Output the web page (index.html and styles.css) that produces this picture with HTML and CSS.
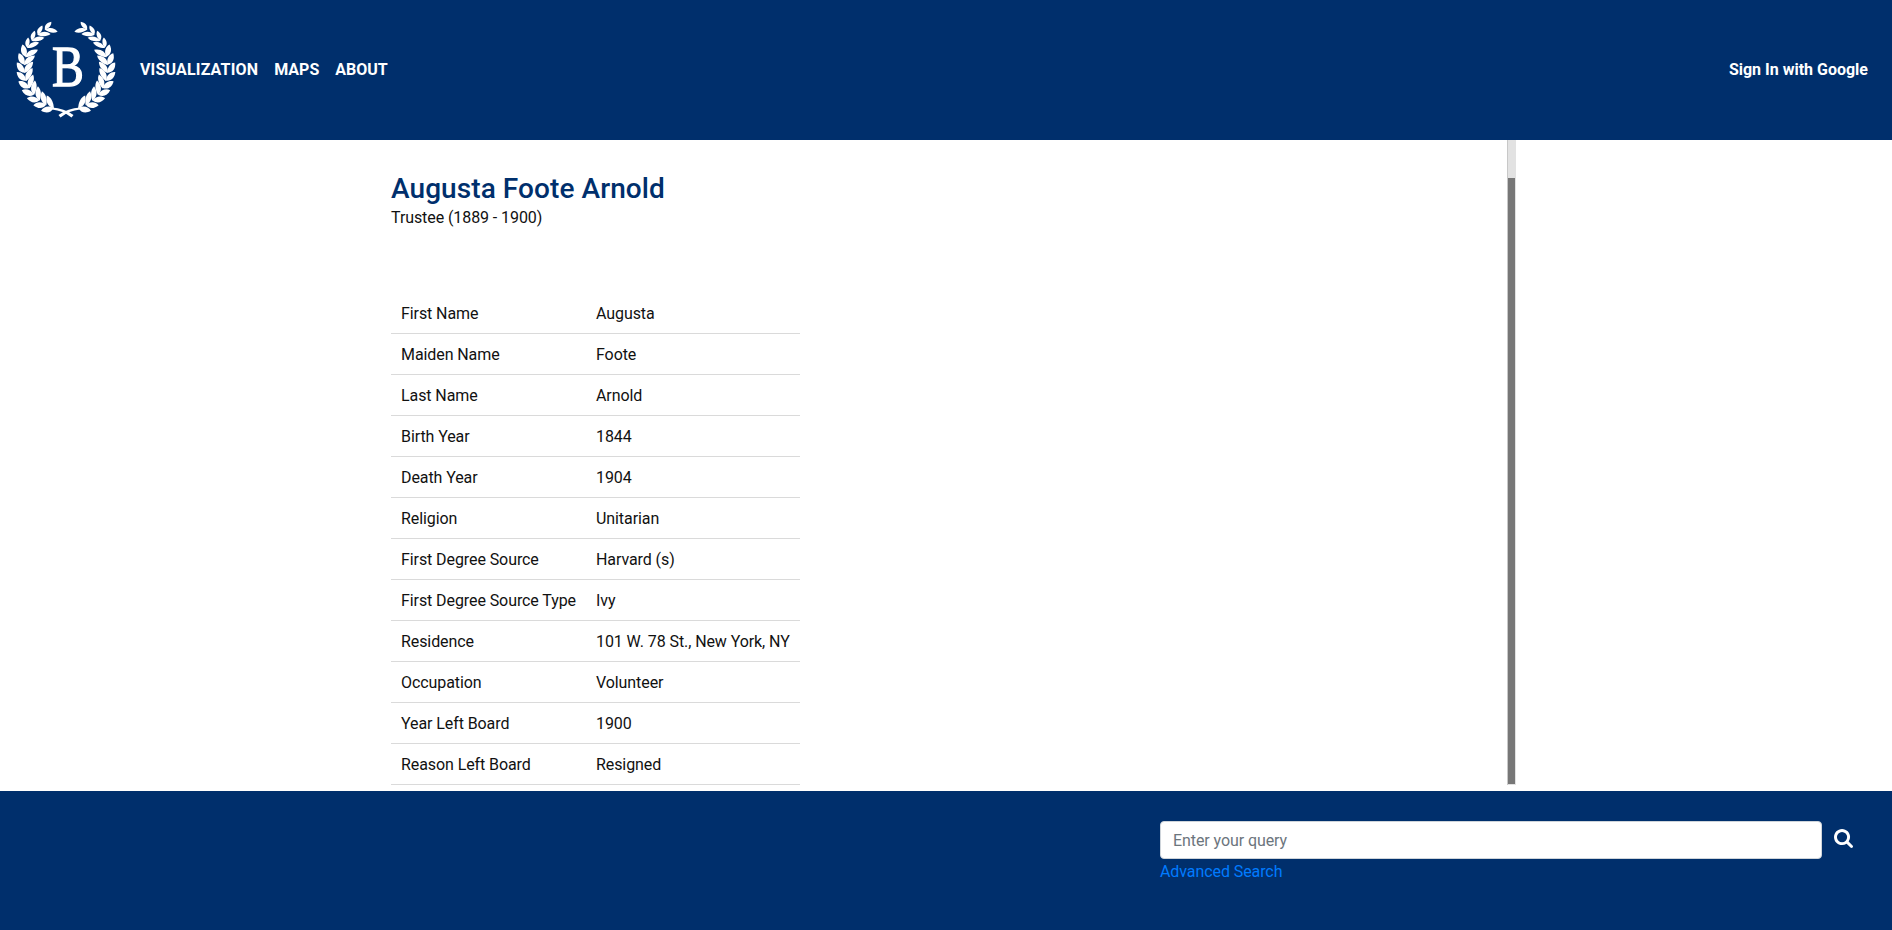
FILE: index.html
```html
<!DOCTYPE html>
<html lang="en">
<head>
<meta charset="utf-8">
<title>Augusta Foote Arnold</title>
<link rel="stylesheet" href="styles.css">
</head>
<body>
<header class="navbar">
  <a class="brand">
    <svg class="logo" width="132" height="140" viewBox="0 0 132 140" fill="#fff">
      <defs>
        <g id="pair">
          <path d="M24.800 75C19.300 75 16.300 71 16.600 65.200C20.800 65.200 25 69 24.800 75Z"/>
          <path d="M24.600 75.500C23.300 69.500 26.300 65 32.800 63.400C33.200 68.400 29.700 72.500 24.600 75.500Z"/>
        </g>
        <g id="tip">
          <path d="M22.800 75C18.500 74.500 16.800 71 17.400 66.400C20.500 67 23 70.500 22.800 75Z"/>
          <path d="M22.600 75.500C22 69.500 24.200 65.500 29 63.800C29.600 68 27 72.500 22.600 75.500Z"/>
        </g>
        <g id="branch">
          <use href="#pair" transform="rotate(-63 66 68)"/>
          <use href="#pair" transform="rotate(-52 66 68)"/>
          <use href="#pair" transform="rotate(-41 66 68)"/>
          <use href="#pair" transform="rotate(-30 66 68)"/>
          <use href="#pair" transform="rotate(-19 66 68)"/>
          <use href="#pair" transform="rotate(-8 66 68)"/>
          <use href="#pair" transform="rotate(3 66 68)"/>
          <use href="#pair" transform="rotate(14 66 68)"/>
          <use href="#pair" transform="rotate(25 66 68)"/>
          <use href="#tip" transform="rotate(37 66 68)"/>
          <use href="#tip" transform="rotate(48 66 68)"/>
          <use href="#tip" transform="rotate(59 66 68)"/>
          <use href="#tip" transform="rotate(70.500 66 68)"/>
          <path d="M52 107.500Q64 108 73.500 115L71.500 117.500Q63 110.500 52 109.500Z"/>
        </g>
      </defs>
      <use href="#branch"/>
      <use href="#branch" transform="matrix(-1 0 0 1 132 0)"/>
      <text class="logo-letter" transform="translate(52 85.500) scale(.84 1)">B</text>
    </svg>
  </a>
  <nav class="nav">
    <a class="nav-wide">VISUALIZATION</a>
    <a>MAPS</a>
    <a>ABOUT</a>
  </nav>
  <a class="sign-in">Sign In with Google</a>
</header>
<main class="content">
  <section class="profile">
    <h1 class="name">Augusta Foote Arnold</h1>
    <p class="role">Trustee (1889 - 1900)</p>
    <table class="facts">
      <tr><td>First Name</td><td>Augusta</td></tr>
      <tr><td>Maiden Name</td><td>Foote</td></tr>
      <tr><td>Last Name</td><td>Arnold</td></tr>
      <tr><td>Birth Year</td><td>1844</td></tr>
      <tr><td>Death Year</td><td>1904</td></tr>
      <tr><td>Religion</td><td>Unitarian</td></tr>
      <tr><td>First Degree Source</td><td>Harvard (s)</td></tr>
      <tr><td>First Degree Source Type</td><td>Ivy</td></tr>
      <tr><td>Residence</td><td>101 W. 78 St., New York, NY</td></tr>
      <tr><td>Occupation</td><td>Volunteer</td></tr>
      <tr><td>Year Left Board</td><td>1900</td></tr>
      <tr><td>Reason Left Board</td><td>Resigned</td></tr>
    </table>
  </section>
  <div class="track"><div class="thumb"></div></div>
</main>
<footer class="footer">
  <form class="search">
    <input class="query" type="text" placeholder="Enter your query">
    <a class="advanced">Advanced Search</a>
  </form>
  <svg class="search-icon" width="19" height="19" viewBox="64 128 1664 1664" fill="#fff"><path d="M1216 832q0-185-131.500-316.500t-316.500-131.500-316.500 131.500-131.500 316.500 131.500 316.500 316.500 131.500 316.500-131.500 131.500-316.500zm512 832q0 52-38 90t-90 38q-54 0-90-38l-343-342q-179 124-399 124-143 0-273.500-55.500t-225-150-150-225-55.500-273.500 55.500-273.500 150-225 225-150 273.500-55.500 273.500 55.500 225 150 150 225 55.500 273.500q0 220-124 399l343 343q37 37 37 90z"/></svg>
</footer>
</body>
</html>
```
FILE: styles.css
```css
* { box-sizing: border-box; }
body {
  margin: 0;
  height: 930px;
  display: flex;
  flex-direction: column;
  overflow: hidden;
  background: #fff;
  color: #111;
  font: 16px/24px Roboto, sans-serif;
  letter-spacing: -.085px;
}
.navbar {
  height: 140px;
  flex: none;
  display: flex;
  align-items: center;
  padding-right: 24px;
  background: #002f6c;
  color: #fff;
  font-weight: 700;
  letter-spacing: 0;
}
.brand, .logo { display: block; }
.logo-letter {
  font: 57px "Liberation Serif", serif;
  stroke: #fff;
  stroke-width: 1.3px;
}
.nav { display: flex; gap: 16px; margin-left: 8px; }
.nav-wide { letter-spacing: .17px; }
.sign-in { margin-left: auto; }
.content {
  height: 651px;
  flex: none;
  display: flex;
  justify-content: space-between;
  padding: 0 376px 6px 391px;
}
.profile { padding-top: 32px; }
.name {
  margin: 0;
  color: #002f6c;
  font-size: 28px;
  font-weight: 500;
  line-height: 34px;
  letter-spacing: .08px;
}
.role { margin: 0 0 63px; }
.facts { border-collapse: separate; border-spacing: 0; }
.facts td {
  height: 41px;
  padding: 9px 10px 7px;
  border-bottom: 1px solid #dadada;
  white-space: nowrap;
}
.track {
  width: 9px;
  padding: 38px 1px 1px 0;
  border-left: 1px solid #c8c8c8;
  background: #e2e2e2;
}
.thumb { height: 606px; background: #777; }
.footer {
  flex: 1;
  display: flex;
  align-items: flex-start;
  gap: 12px;
  padding: 30px 39px 0 1160px;
  background: #002f6c;
}
.search { width: 662px; display: flex; flex-direction: column; }
.query {
  height: 38px;
  padding: 6px 12px;
  border: 1px solid #ced4da;
  border-radius: 4px;
  background: #fff;
  font: inherit;
  letter-spacing: inherit;
}
.query::placeholder { color: #6c757d; opacity: 1; }
.advanced { margin-top: 1px; color: #007bff; }
.search-icon { margin-top: 8px; }
```
